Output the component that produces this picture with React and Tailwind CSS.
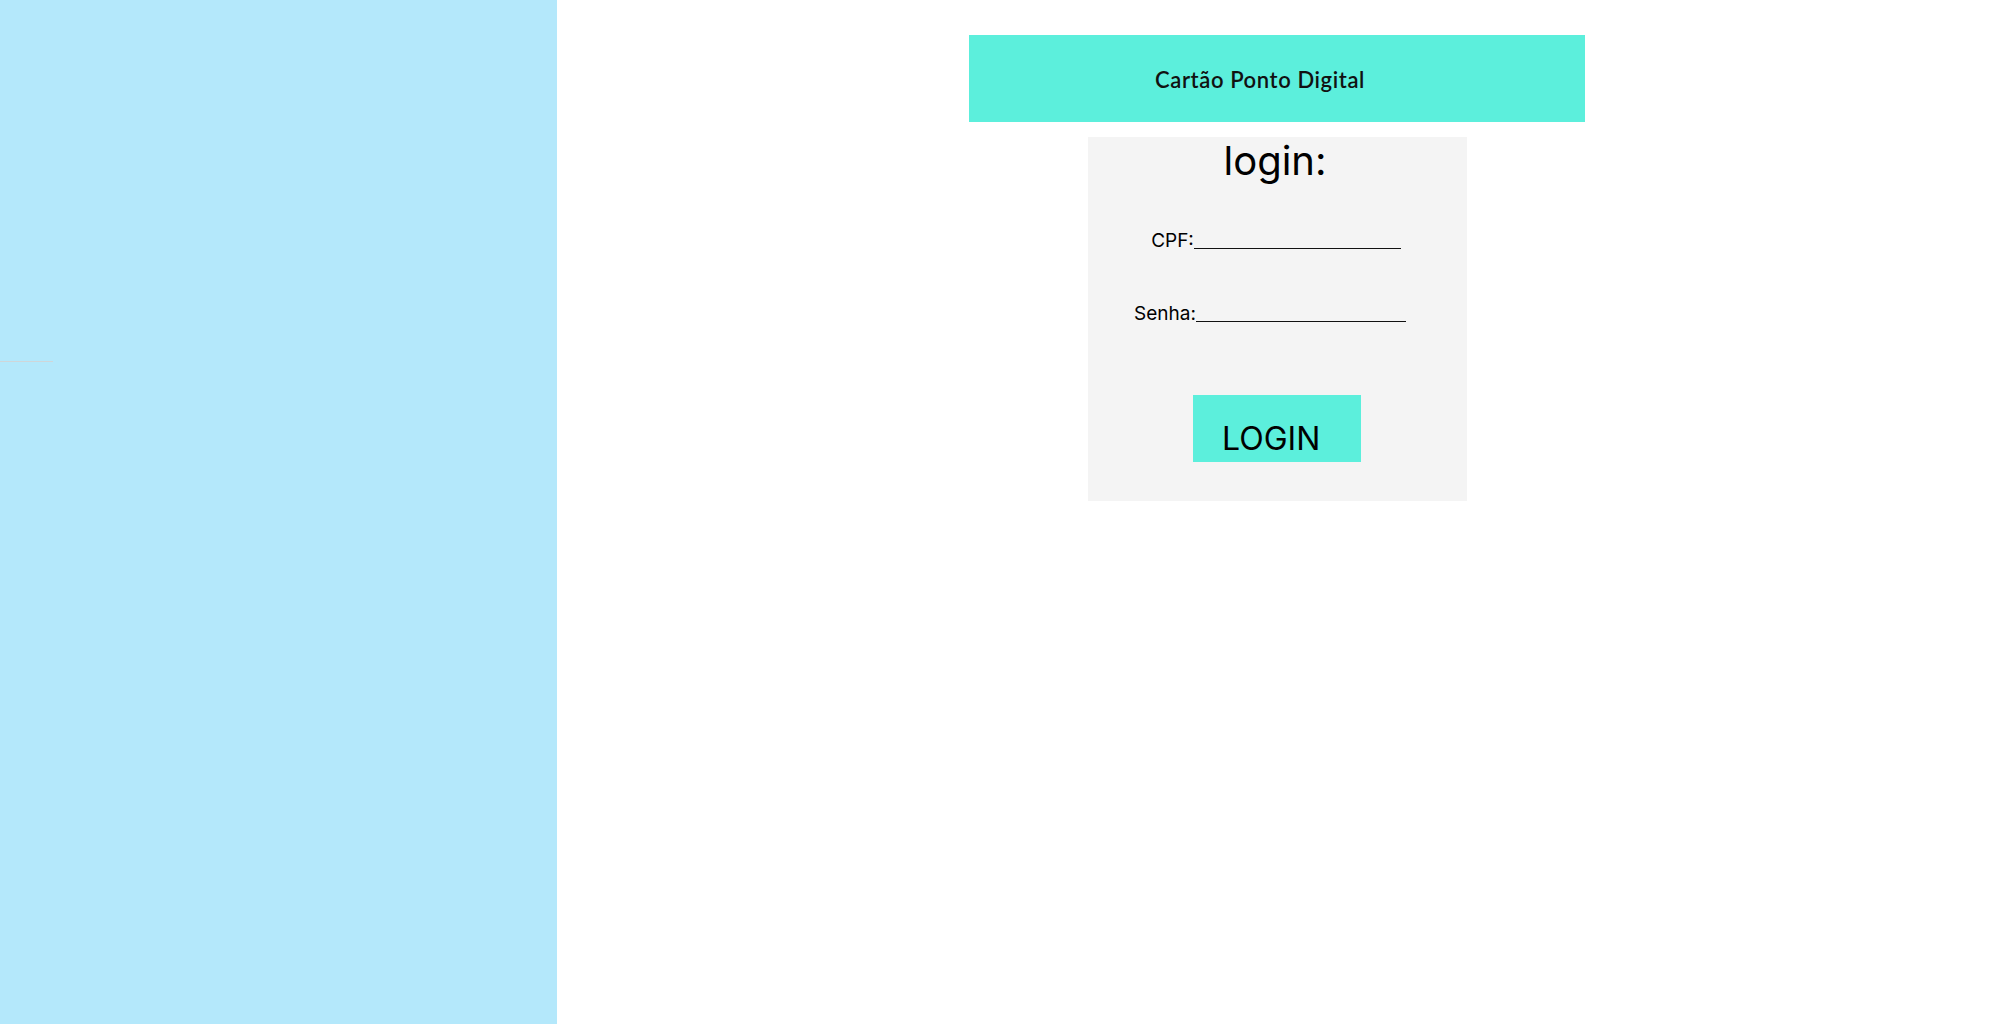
import React from "react";

export default function App() {
  return (
    <div className="flex w-[1997px] h-[1024px] bg-white overflow-hidden" style={{ fontFamily: "Inter, 'Liberation Sans', sans-serif" }}>
      <aside className="w-[557px] h-[1024px] shrink-0 bg-[#b4e8fb] pt-[361px]">
        <div className="w-[53px] h-[1px] bg-[#cfd6d9]" />
      </aside>
      <main className="flex-1 flex flex-col items-center pt-[35px]">
        <header className="w-[616px] h-[87px] bg-[#5cefdc] flex items-center justify-center pr-[34px] pt-[2px]">
          <h1 className="text-[22px] font-semibold text-[#111] tracking-[0.6px]" style={{ fontFamily: "Lato, 'Open Sans', sans-serif" }}>
            Cartão Ponto Digital
          </h1>
        </header>
        <section className="mt-[15px] w-[379px] h-[364px] bg-[#f4f4f4] flex flex-col items-center">
          <h2 className="text-[40px] leading-[48px] text-black font-normal pr-[4px]">login:</h2>
          <div className="mt-[45px] text-[19px] leading-[22px] text-black flex items-baseline pr-[2px]">
            <span>CPF:</span>
            <span className="inline-block w-[207px] border-b-[1.5px] border-[#111] translate-y-[2px]" />
          </div>
          <div className="mt-[51px] text-[19px] leading-[22px] text-black flex items-baseline -ml-[14px]">
            <span>Senha:</span>
            <span className="inline-block w-[210px] border-b-[1.5px] border-[#111] translate-y-[2px]" />
          </div>
          <button className="mt-[70px] w-[168px] h-[67px] bg-[#5cefdc] text-left pl-[29px] pt-[25px] text-[32px] leading-[38px] text-black flex items-start">
            LOGIN
          </button>
        </section>
      </main>
    </div>
  );
}
